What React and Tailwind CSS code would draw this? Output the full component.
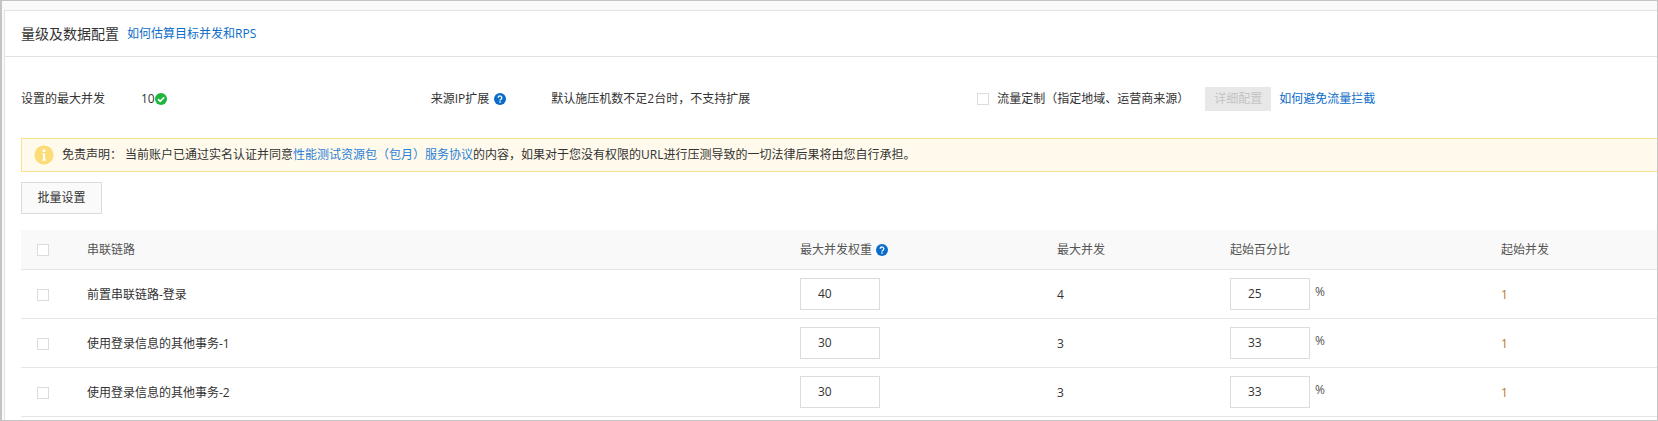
import { useState } from 'react';

const font = "font-['Open_Sans','Noto_Sans_CJK_SC',sans-serif]";

const rows = [
  { name: '前置串联链路-登录', weight: '40', max: 4, percent: '25' },
  { name: '使用登录信息的其他事务-1', weight: '30', max: 3, percent: '33' },
  { name: '使用登录信息的其他事务-2', weight: '30', max: 3, percent: '33' },
];

function HelpIcon({ className }) {
  return (
    <svg viewBox="0 0 12 12" className={className}>
      <circle cx="6" cy="6" r="6" fill="#0a6cc9" />
      <path d="M4.2 4.7a1.8 1.8 0 1 1 2.7 1.6c-.6.3-.9.6-.9 1.2" fill="none" stroke="#fff" strokeWidth="1.3" />
      <rect x="5.3" y="8.3" width="1.4" height="1.4" fill="#fff" />
    </svg>
  );
}

function CheckIcon() {
  return (
    <svg viewBox="0 0 12 12" className="w-[12px] h-[12px]">
      <circle cx="6" cy="6" r="6" fill="#1db53a" />
      <path d="M3 6.2l2.2 2.1L9.2 4.2" fill="none" stroke="#fff" strokeWidth="1.6" />
    </svg>
  );
}

function InfoIcon() {
  return (
    <svg viewBox="0 0 20 20" className="w-[20px] h-[20px]">
      <circle cx="10" cy="10" r="9.5" fill="#fcdc77" />
      <rect x="8.8" y="4.4" width="2.6" height="2.6" fill="#fff" />
      <path d="M8 8.4h3.2v6.2h1v1.2H8v-1.2h1V9.6H8z" fill="#fff" />
    </svg>
  );
}

function Checkbox() {
  return <span className="block w-[12px] h-[12px] border border-[#dcdcdc] bg-white" />;
}

function NumInput({ value }) {
  const [val, setVal] = useState(value);
  return (
    <input
      value={val}
      onChange={(e) => setVal(e.target.value)}
      className="w-[80px] h-[32px] border border-[#dcdcdc] pl-[17px] text-[12px] text-[#333] bg-white outline-none align-middle"
    />
  );
}

export default function App() {
  return (
    <div className={`${font} w-[1658px] h-[421px] overflow-hidden border border-l-2 border-[#c4c4c4] bg-[#fafafa] pt-[9px] pl-[2px] text-[12px] text-[#333]`}>
      <div className="h-[500px] border border-r-0 border-[#e2e2e2] bg-white">
        <div className="flex items-center h-[46px] pl-[16px] border-b border-[#e2e2e2]">
          <h2 className="text-[14px] font-normal text-[#333]">量级及数据配置</h2>
          <a className="ml-[8px] text-[#0a6cc9]">如何估算目标并发和RPS</a>
        </div>

        <div className="flex items-center h-[81px] pt-[2px] pl-[16px]">
          <span className="w-[120px]">设置的最大并发</span>
          <span>10</span>
          <CheckIcon />
          <span className="ml-[264px]">来源IP扩展</span>
          <HelpIcon className="ml-[5px] w-[12px] h-[12px]" />
          <span className="ml-[45px]">默认施压机数不足2台时，不支持扩展</span>
          <span className="ml-[227px]"><Checkbox /></span>
          <span className="ml-[8px]">流量定制（指定地域、运营商来源）</span>
          <button className="ml-[16px] w-[66px] h-[24px] bg-[#e8e8e8] text-[#c4c4c4] whitespace-nowrap">详细配置</button>
          <a className="ml-[8px] text-[#0a6cc9]">如何避免流量拦截</a>
        </div>

        <div className="ml-[16px] flex items-center h-[34px] pl-[12px] border border-r-0 border-[#fbe38a] bg-[#fffaeb]">
          <InfoIcon />
          <span className="ml-[8px]">免责声明：</span>
          <span className="ml-[3px]">当前账户已通过实名认证并同意<a className="text-[#2a7fd8]">性能测试资源包（包月）服务协议</a>的内容，如果对于您没有权限的URL进行压测导致的一切法律后果将由您自行承担。</span>
        </div>

        <button className="block ml-[16px] mt-[10px] w-[81px] h-[32px] border border-[#dcdcdc] bg-[#fafafa] text-[#333]">批量设置</button>

        <table className="ml-[16px] mt-[16px] w-[1636px] table-fixed border-collapse">
          <colgroup>
            <col className="w-[66px]" />
            <col className="w-[713px]" />
            <col className="w-[257px]" />
            <col className="w-[173px]" />
            <col className="w-[271px]" />
            <col />
          </colgroup>
          <thead>
            <tr className="h-[39px] bg-[#f9f9f9] border-b border-[#e6e6e6] text-[#555]">
              <th className="pl-[16px] pt-[2px] font-normal text-left"><Checkbox /></th>
              <th className="pt-[2px] font-normal text-left">串联链路</th>
              <th className="pt-[2px] font-normal text-left">
                <span className="inline-flex items-center">最大并发权重<HelpIcon className="ml-[4px] w-[12px] h-[12px]" /></span>
              </th>
              <th className="pt-[2px] font-normal text-left">最大并发</th>
              <th className="pt-[2px] font-normal text-left">起始百分比</th>
              <th className="pt-[2px] font-normal text-left">起始并发</th>
            </tr>
          </thead>
          <tbody>
            {rows.map((r) => (
              <tr key={r.name} className="h-[49px] border-b border-[#e6e6e6]">
                <td className="pl-[16px] pt-[2px]"><Checkbox /></td>
                <td className="pt-[2px]">{r.name}</td>
                <td><NumInput value={r.weight} /></td>
                <td className="pt-[2px]">{r.max}</td>
                <td>
                  <NumInput value={r.percent} />
                  <span className="ml-[5px] align-[1px] text-[#555]">%</span>
                </td>
                <td className="pt-[2px] text-[#b87a1e]">1</td>
              </tr>
            ))}
          </tbody>
        </table>
      </div>
    </div>
  );
}
